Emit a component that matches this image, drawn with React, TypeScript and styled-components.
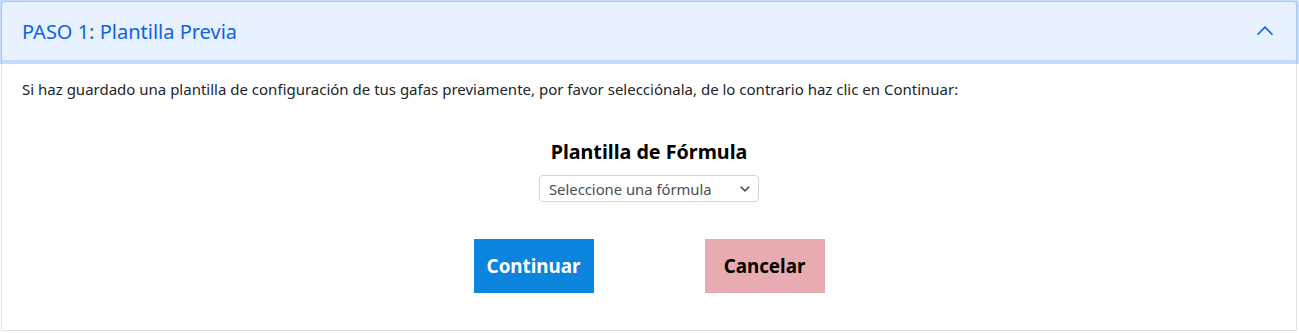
import React, { useState } from 'react';
import styled, { createGlobalStyle } from 'styled-components';

const GlobalStyle = createGlobalStyle`
  * { box-sizing: border-box; }
  body {
    margin: 0;
    background: #fff;
    font-family: "Noto Sans", "Open Sans", sans-serif;
    color: #212529;
  }
`;

const Page = styled.div`
  padding: 1px 2px 2px 1px;
`;

const AccordionItem = styled.div`
  border: 1px solid #dee2e6;
  border-radius: 4px 4px 0 0;
  background: #fff;
`;

const HeaderButton = styled.button<{ open: boolean }>`
  position: relative;
  z-index: 3;
  width: 100%;
  height: 58px;
  display: flex;
  align-items: center;
  justify-content: space-between;
  padding: 0 20px 0 20px;
  border: 0;
  border-radius: 3px 3px 0 0;
  background: ${p => (p.open ? '#e7f1ff' : '#fff')};
  color: #0c63e4;
  font-family: "Noto Sans", "Open Sans", sans-serif;
  font-size: 20px;
  text-align: left;
  cursor: pointer;
  box-shadow: 0 0 0 4px rgba(13, 110, 253, 0.25);
  outline: none;
`;

const Chevron = styled.svg<{ open: boolean }>`
  width: 20px;
  height: 20px;
  margin-right: 1px;
  transform: ${p => (p.open ? 'none' : 'rotate(180deg)')};
`;

const Body = styled.div`
  padding: 17px 20px 37px;
`;

const Intro = styled.p`
  margin: 0;
  font-size: 15px;
  line-height: 24px;
  color: #212529;
`;

const Form = styled.div`
  display: flex;
  flex-direction: column;
  align-items: center;
  margin-top: 38px;
`;

const Label = styled.label`
  font-size: 19.7px;
  font-weight: 700;
  color: #000;
  line-height: 26px;
`;

const Select = styled.select`
  margin-top: 10px;
  width: 220px;
  height: 27px;
  padding: 0 28px 0 9px;
  border: 1px solid #ced4da;
  border-radius: 4px;
  background: #fff url("data:image/svg+xml,%3csvg xmlns='http://www.w3.org/2000/svg' viewBox='0 0 16 16'%3e%3cpath fill='none' stroke='%23555' stroke-linecap='round' stroke-linejoin='round' stroke-width='2.5' d='M2 5l6 6 6-6'/%3e%3c/svg%3e") no-repeat right 8px center / 10px 10px;
  appearance: none;
  font-family: "Noto Sans", "Open Sans", sans-serif;
  font-size: 14.8px;
  color: #495057;
`;

const Actions = styled.div`
  display: flex;
  justify-content: center;
  gap: 111px;
  margin-top: 37px;
`;

const ActionButton = styled.button<{ tone: 'primary' | 'cancel' }>`
  width: 120px;
  height: 54px;
  border: 0;
  background: ${p => (p.tone === 'primary' ? '#0a84dd' : '#e8abb0')};
  color: ${p => (p.tone === 'primary' ? '#fff' : '#000')};
  font-family: "Noto Sans", "Open Sans", sans-serif;
  font-size: 18.8px;
  font-weight: 700;
  cursor: pointer;
`;

export default function App() {
  const [open, setOpen] = useState(true);
  const [template, setTemplate] = useState('');

  return (
    <Page>
      <GlobalStyle />
      <AccordionItem>
        <HeaderButton open={open} onClick={() => setOpen(!open)}>
          <span>PASO 1: Plantilla Previa</span>
          <Chevron open={open} viewBox="0 0 16 16">
            <path d="M2 11l6-6 6 6" fill="none" stroke="#0c63e4" strokeWidth="1.3" />
          </Chevron>
        </HeaderButton>
        {open && (
          <Body>
            <Intro>
              Si haz guardado una plantilla de configuración de tus gafas previamente, por favor
              selecciónala, de lo contrario haz clic en Continuar:
            </Intro>
            <Form>
              <Label htmlFor="plantilla">Plantilla de Fórmula</Label>
              <Select id="plantilla" value={template} onChange={e => setTemplate(e.target.value)}>
                <option value="">Seleccione una fórmula</option>
              </Select>
            </Form>
            <Actions>
              <ActionButton tone="primary">Continuar</ActionButton>
              <ActionButton tone="cancel">Cancelar</ActionButton>
            </Actions>
          </Body>
        )}
      </AccordionItem>
    </Page>
  );
}
